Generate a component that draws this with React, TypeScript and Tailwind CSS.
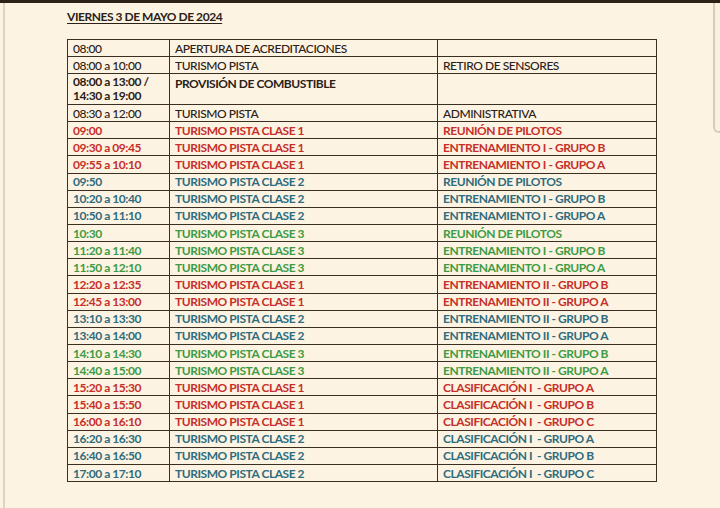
import React from "react";

type Tone = "plain" | "bold" | "red" | "teal" | "green";

const rows: { time: string; cat: string; act: string; tone: Tone }[] = [
  { time: "08:30 a 12:00", cat: "TURISMO PISTA", act: "ADMINISTRATIVA", tone: "plain" },
  { time: "09:00", cat: "TURISMO PISTA CLASE 1", act: "REUNIÓN DE PILOTOS", tone: "red" },
  { time: "09:30 a 09:45", cat: "TURISMO PISTA CLASE 1", act: "ENTRENAMIENTO I - GRUPO B", tone: "red" },
  { time: "09:55 a 10:10", cat: "TURISMO PISTA CLASE 1", act: "ENTRENAMIENTO I - GRUPO A", tone: "red" },
  { time: "09:50", cat: "TURISMO PISTA CLASE 2", act: "REUNIÓN DE PILOTOS", tone: "teal" },
  { time: "10:20 a 10:40", cat: "TURISMO PISTA CLASE 2", act: "ENTRENAMIENTO I - GRUPO B", tone: "teal" },
  { time: "10:50 a 11:10", cat: "TURISMO PISTA CLASE 2", act: "ENTRENAMIENTO I - GRUPO A", tone: "teal" },
  { time: "10:30", cat: "TURISMO PISTA CLASE 3", act: "REUNIÓN DE PILOTOS", tone: "green" },
  { time: "11:20 a 11:40", cat: "TURISMO PISTA CLASE 3", act: "ENTRENAMIENTO I - GRUPO B", tone: "green" },
  { time: "11:50 a 12:10", cat: "TURISMO PISTA CLASE 3", act: "ENTRENAMIENTO I - GRUPO A", tone: "green" },
  { time: "12:20 a 12:35", cat: "TURISMO PISTA CLASE 1", act: "ENTRENAMIENTO II - GRUPO B", tone: "red" },
  { time: "12:45 a 13:00", cat: "TURISMO PISTA CLASE 1", act: "ENTRENAMIENTO II - GRUPO A", tone: "red" },
  { time: "13:10 a 13:30", cat: "TURISMO PISTA CLASE 2", act: "ENTRENAMIENTO II - GRUPO B", tone: "teal" },
  { time: "13:40 a 14:00", cat: "TURISMO PISTA CLASE 2", act: "ENTRENAMIENTO II - GRUPO A", tone: "teal" },
  { time: "14:10 a 14:30", cat: "TURISMO PISTA CLASE 3", act: "ENTRENAMIENTO II - GRUPO B", tone: "green" },
  { time: "14:40 a 15:00", cat: "TURISMO PISTA CLASE 3", act: "ENTRENAMIENTO II - GRUPO A", tone: "green" },
  { time: "15:20 a 15:30", cat: "TURISMO PISTA CLASE 1", act: "CLASIFICACIÓN I  - GRUPO A", tone: "red" },
  { time: "15:40 a 15:50", cat: "TURISMO PISTA CLASE 1", act: "CLASIFICACIÓN I  - GRUPO B", tone: "red" },
  { time: "16:00 a 16:10", cat: "TURISMO PISTA CLASE 1", act: "CLASIFICACIÓN I  - GRUPO C", tone: "red" },
  { time: "16:20 a 16:30", cat: "TURISMO PISTA CLASE 2", act: "CLASIFICACIÓN I  - GRUPO A", tone: "teal" },
  { time: "16:40 a 16:50", cat: "TURISMO PISTA CLASE 2", act: "CLASIFICACIÓN I  - GRUPO B", tone: "teal" },
  { time: "17:00 a 17:10", cat: "TURISMO PISTA CLASE 2", act: "CLASIFICACIÓN I  - GRUPO C", tone: "teal" },
];

const toneClass: Record<Tone, string> = {
  plain: "text-[#2a2118] font-medium",
  bold: "text-[#2a2118] font-bold",
  red: "text-[#c62f2a] font-bold",
  teal: "text-[#2e6c7e] font-bold",
  green: "text-[#3d9b45] font-bold",
};

const cell = "border border-[#3b2f22] pl-[5px] align-middle whitespace-pre leading-[13px]";

export default function App() {
  return (
    <div
      className="relative w-[720px] h-[508px] overflow-hidden bg-[#fdf3e2] text-[12px] tracking-[-0.45px] text-[#2a2118]"
      style={{ fontFamily: "Lato, 'Liberation Sans', sans-serif" }}
    >
      <div className="h-[3px] bg-[#2b2218]" />
      <div className="absolute left-[3px] top-[3px] bottom-0 w-[2px] bg-[#ddd3c4]" />
      <div className="absolute right-0 top-[3px] w-[7px] h-[130px] rounded-bl-[6px] border-l-2 border-b-2 border-[#d4ccbd] bg-[#fbf1e0]" />

      <div className="pl-[67px] pt-[7px]">
        <h1 className="font-bold underline underline-offset-2 text-[12px] leading-[14px]">
          VIERNES 3 DE MAYO DE 2024
        </h1>

        <table className="mt-[15px] border-collapse border border-[#3b2f22] w-[589px] table-fixed">
          <colgroup>
            <col className="w-[102px]" />
            <col className="w-[268px]" />
            <col className="w-[219px]" />
          </colgroup>
          <tbody>
            <tr className={"h-[17px] " + toneClass.plain}>
              <td className={cell}>08:00</td>
              <td className={cell}>APERTURA DE ACREDITACIONES</td>
              <td className={cell}></td>
            </tr>
            <tr className={"h-[17px] " + toneClass.plain}>
              <td className={cell}>08:00 a 10:00</td>
              <td className={cell}>TURISMO PISTA</td>
              <td className={cell}>RETIRO DE SENSORES</td>
            </tr>
            <tr className={"h-[31px] " + toneClass.bold}>
              <td className={cell + " !leading-[14px]"}>
                <div>08:00 a 13:00 /</div>
                <div>14:30 a 19:00</div>
              </td>
              <td className={cell + " !align-top pt-[3px]"}>PROVISIÓN DE COMBUSTIBLE</td>
              <td className={cell}></td>
            </tr>
            {rows.map((r, i) => (
              <tr key={i} className={"h-[17.15px] " + toneClass[r.tone]}>
                <td className={cell}>{r.time}</td>
                <td className={cell}>{r.cat}</td>
                <td className={cell}>{r.act}</td>
              </tr>
            ))}
          </tbody>
        </table>
      </div>
    </div>
  );
}
